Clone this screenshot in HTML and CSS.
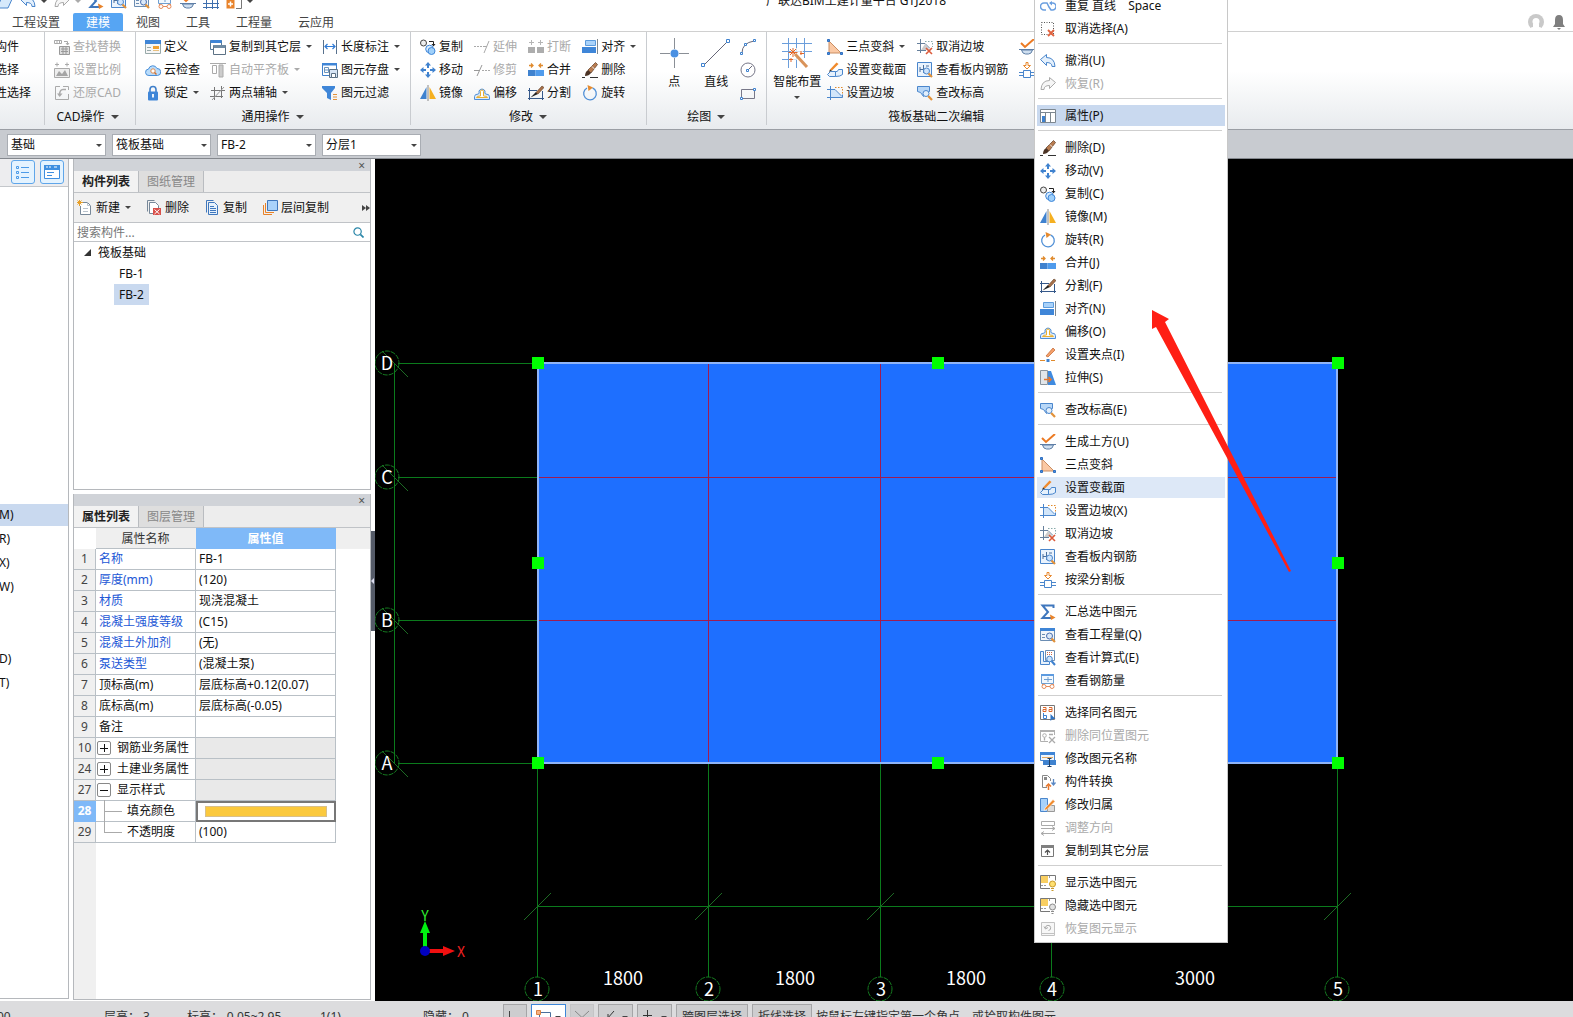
FILE: index.html
```html
<!DOCTYPE html>
<html lang="zh">
<head>
    <meta charset="UTF-8">
    <meta name="viewport" content="width=device-width, initial-scale=1.0">
    <title>广联达BIM土建计量平台 GTJ2018</title>
    <link rel="stylesheet" href="styles.css">
</head>
<body>
    <!-- 图标库 -->
    <svg class="sprite" aria-hidden="true">
        <symbol id="i-replace" viewBox="0 0 16 16"><path d="M0.500 1.500h7v3h-7zM3 1.500v3M5.500 1.500v3M10 2.500h3.500v3M12 4l1.500 2L15 4" fill="none" stroke="#a9a9a9"/><path d="M5.500 7.500h10v8h-10z" fill="#ddd" stroke="#999"/><path d="M7 10h7M7 12.500h7M9 8v7M12 8v7" stroke="#999"/></symbol>
        <symbol id="i-scale" viewBox="0 0 16 16"><path d="M1 2.500h4M3 .500v4M11 2.500h4M13 .500v4" stroke="#aaa"/><path d="M.500 6.500h15v9H.500z" fill="#eee" stroke="#aaa"/><path d="M2 14l3-5 3 3 3-4 3 6z" fill="#a5a5a5"/></symbol>
        <symbol id="i-restore" viewBox="0 0 16 16"><path d="M6 1.500H1.500v13h13V9M9 1.500h5.500V5" fill="none" stroke="#aaa"/><path d="M12 4.500H9c-3 0-3.500 3-3.500 6" fill="none" stroke="#aaa" stroke-width="1.500"/><path d="M3 8.500h5.500L5.700 12z" fill="#aaa"/></symbol>
        <symbol id="i-define" viewBox="0 0 16 16"><path d="M.500 1.500h15v13H.500z" fill="#f6f6f6" stroke="#9aa"/><path d="M0 1h16v4H0z" fill="#3f85d6"/><path d="M2 8.500h4M2 11.500h4" stroke="#9aa"/><path d="M8 7h6v3H8z" fill="#f0a030"/><path d="M8 11.500h6" stroke="#e8c080"/></symbol>
        <symbol id="i-cloud" viewBox="0 0 16 16"><path d="M4 13.500a3.200 3.200 0 0 1-.500-6.400A4.500 4.500 0 0 1 12 6.500a3.500 3.500 0 0 1 .500 7z" fill="#b9dcfb" stroke="#4a8fd8"/><circle cx="8" cy="9" r="2.200" fill="#fff" stroke="#e08a4a"/><path d="M9.500 10.500l2 2" stroke="#d07030" stroke-width="1.500"/></symbol>
        <symbol id="i-lock" viewBox="0 0 16 16"><path d="M5 8V4.500a3 3 0 0 1 6 0V8" fill="none" stroke="#3f7fca" stroke-width="1.600"/><rect x="3" y="6.500" width="10" height="9" rx="1" fill="#3f86d8"/><path d="M8 9v3.500" stroke="#fff" stroke-width="1.800"/></symbol>
        <symbol id="i-copyfloor" viewBox="0 0 16 16"><path d="M.500 1.500h11v9H.500z" fill="#fff" stroke="#567b9b"/><path d="M.500 1h11v3H.500z" fill="#3f85d6"/><path d="M3.500 6.500h12v9h-12z" fill="#fff" stroke="#5c7184"/><path d="M3.500 6h12v3h-12z" fill="#6f8ba3"/></symbol>
        <symbol id="i-level" viewBox="0 0 16 16"><path d="M0 1.500h16" stroke="#aaa"/><path d="M2.500 3.500h4v8h-4z" fill="#fff" stroke="#aaa"/><path d="M9 3h4v12H9z" fill="#ccc" stroke="#aaa"/></symbol>
        <symbol id="i-axis" viewBox="0 0 16 16"><path d="M4.500 2v13M11.500 1v12M1 5.500h14M0 11.500h13" stroke="#777"/><path d="M2 15L14 2" stroke="#999"/></symbol>
        <symbol id="i-dim" viewBox="0 0 16 16"><path d="M1.500 1v14M14.500 1v14" stroke="#58718d"/><path d="M3 7.500h10M5.500 5L3 7.500 5.500 10M10.500 5L13 7.500 10.500 10" fill="none" stroke="#2f7ad6" stroke-width="1.200"/></symbol>
        <symbol id="i-save" viewBox="0 0 16 16"><path d="M.500 1.500h14v12H.500z" fill="#fff" stroke="#3f7fca"/><path d="M0 1h15v2.500H0z" fill="#3f85d6"/><path d="M2.500 5.500h4v5h-4zM3 8h3" fill="none" stroke="#6a93bd"/><path d="M7.500 7.500h8v8h-8z" fill="#d7e5f5" stroke="#5c7184"/><path d="M9.500 11.500h4v4h-4z" fill="#fff" stroke="#5c7184"/></symbol>
        <symbol id="i-filter" viewBox="0 0 16 16"><path d="M0 1h13v2L9 8v7l-4-2V8L0 3z" fill="#3f86d8"/><path d="M11 9.500h4M11 12h4M11 14.500h4" stroke="#e2923a"/></symbol>
        <symbol id="i-copy" viewBox="0 0 16 16"><circle cx="3.500" cy="4" r="3" fill="#eee" stroke="#444"/><path d="M9 2.500h4.500V6" fill="none" stroke="#222"/><path d="M11.500 5h4l-2 2.500z" fill="#222"/><circle cx="9.500" cy="10" r="3.800" fill="#d9edff" stroke="#3f86d8"/><circle cx="11.500" cy="12" r="3.500" fill="#9fd0fa" stroke="#3f86d8"/></symbol>
        <symbol id="i-move" viewBox="0 0 16 16"><path d="M8 0l3 3.500H9V6H7V3.500H5zM8 16l3-3.500H9V10H7v2.500H5zM0 8l3.500-3v2H6v2H3.500v2zM16 8l-3.500-3v2H10v2h2.500v2z" fill="#3f82cf"/></symbol>
        <symbol id="i-mirror" viewBox="0 0 16 16"><path d="M6.500 2v12H0z" fill="#3f82cf"/><path d="M8 0v16" stroke="#888"/><path d="M9.500 2v12H16z" fill="#f5b021"/></symbol>
        <symbol id="i-extend" viewBox="0 0 16 16"><path d="M0 7.500h10" stroke="#aaa" stroke-dasharray="2 1"/><path d="M10 14l5-12M10 7.500h3" stroke="#aaa"/></symbol>
        <symbol id="i-trim" viewBox="0 0 16 16"><path d="M0 8.500h6M3 14L8 3" stroke="#999"/><path d="M8 8.500h8" stroke="#aaa" stroke-dasharray="2 1"/></symbol>
        <symbol id="i-offset" viewBox="0 0 16 16"><path d="M.500 14.500v-3q0-2.500 4-2.500 1-.500.500-3a3.300 3.300 0 0 1 6 0q-.500 2.500.500 3 4 0 4 2.500v3z" fill="#dceafa" stroke="#4f8fd6"/><path d="M2.500 12.500q0-1.500 4-1.500V6.500a1.500 1.500 0 0 1 3 0V11q4 0 4 1.500z" fill="#fff" stroke="#eab030"/></symbol>
        <symbol id="i-break" viewBox="0 0 16 16"><path d="M1 3.500h5M3.500 1v5M10 3.500h5M12.500 1v5" stroke="#b5b5b5"/><path d="M0 8h7v6H0zM9 8h7v6H9z" fill="#adadad"/></symbol>
        <symbol id="i-merge" viewBox="0 0 16 16"><path d="M1 3.500h4M11 3.500h4M3 1.500l2 2-2 2M13 1.500l-2 2 2 2" fill="none" stroke="#e08a2c" stroke-width="1.300"/><path d="M0 8h7.500v6H0z" fill="#3f82cf"/><path d="M7.500 8H16v6H7.500z" fill="#4f9bec"/></symbol>
        <symbol id="i-split" viewBox="0 0 16 16"><path d="M0 5.500h9M1.500 3v12M0 13.500h16M14.500 6v9" stroke="#35588a"/><path d="M2.500 12.500L8 7l2 2z" fill="#222"/><path d="M8 7.500L14 1l2 1.500-6 6.500z" fill="#a9714a" stroke="#5a3a22" stroke-width=".600"/></symbol>
        <symbol id="i-align" viewBox="0 0 16 16"><path d="M3.500 1.500h10v5h-10z" fill="#a9d2fa" stroke="#5c9bdc"/><path d="M0 8h14v6H0z" fill="#3f86d8"/><path d="M15.500 0v15" stroke="#7f8890"/></symbol>
        <symbol id="i-erase" viewBox="0 0 16 16"><path d="M0 15.500h3M8 15.500h8" stroke="#333"/><path d="M6 8l7.500-7.500 2 2L9 11z" fill="#b97c50" stroke="#5a3a22" stroke-width=".700"/><path d="M10 4.500l3 3" stroke="#eee"/><path d="M3 14q0-4 3-6l3 3q-2 3-6 3z" fill="#4b3325"/></symbol>
        <symbol id="i-rotate" viewBox="0 0 16 16"><path d="M10.500 2.800A6.300 6.300 0 1 1 5 3" fill="none" stroke="#4f8fd6" stroke-width="1.300"/><path d="M5.500 0L11 2.500 6.500 6z" fill="#e58a2e"/></symbol>
        <symbol id="i-point" viewBox="0 0 30 30"><path d="M15.500 0v11M15.500 20v10M1 15.500h10M20 15.500h10" stroke="#8a8f96"/><circle cx="15.500" cy="15.500" r="4" fill="#4a90e2"/></symbol>
        <symbol id="i-line" viewBox="0 0 30 30"><path d="M3 27L27 3" stroke="#667"/><path d="M.500 25.500h3v3h-3zM25.500 1.500h3v3h-3z" fill="#fff" stroke="#3f82cf"/></symbol>
        <symbol id="i-arc" viewBox="0 0 16 16"><path d="M2 14Q2 4 14 2" fill="none" stroke="#667"/><path d="M.500 13.500h2v2h-2zM13.500.500h2v2h-2zM4.500 4.500h2v2h-2z" fill="#fff" stroke="#3f82cf"/></symbol>
        <symbol id="i-circle" viewBox="0 0 16 16"><circle cx="8" cy="8" r="7" fill="none" stroke="#778"/><path d="M8 8l4-4" stroke="#667"/><path d="M6.500 7.500h2v2h-2z" fill="#fff" stroke="#3f82cf"/></symbol>
        <symbol id="i-rect" viewBox="0 0 16 16"><path d="M1.500 4.500h13v9h-13z" fill="none" stroke="#778"/><path d="M.500 12.500h2v2h-2zM13.500 3.500h2v2h-2z" fill="#fff" stroke="#3f82cf"/></symbol>
        <symbol id="i-smart" viewBox="0 0 30 30"><path d="M6.500 0v30M14.500 0v30M22.500 0v20M0 5.500h30M0 13.500h30M0 21.500h14" stroke="#6b9edb"/><path d="M9 10h12v12H9z" fill="#fff" fill-opacity=".700"/><path d="M11 10v9M6.500 14.500h9M8 11l6 6M14 11l-6 6M19 17v-4M9 24v-4M18 15.500h4M7 21.500h4" stroke="#e2682a"/><path d="M13 16l12 13" stroke="#d9935a" stroke-width="3"/></symbol>
        <symbol id="i-slope3" viewBox="0 0 16 16"><path d="M2 2l12 12H2z" fill="#fbc9a4" stroke="#c98d62"/><path d="M.500.500h2v2h-2zM.500 13.500h2v2h-2zM13.500 13.500h2v2h-2z" fill="#4a90e2" stroke="#2f6fc0"/></symbol>
        <symbol id="i-section" viewBox="0 0 16 16"><path d="M.500 12.500l3-3h5q2 1 3-2h4v5q-2 2-7 2h-6z" fill="#e6f1fc" stroke="#4a86cc"/><path d="M8.500 9.500v5" stroke="#4a86cc"/><path d="M3 7.500L9.500.500 11.500 2 5 8.500z" fill="#f08a2c"/><path d="M3 7.500l-1 2.500 3-1.500z" fill="#333"/></symbol>
        <symbol id="i-setslope" viewBox="0 0 16 16"><path d="M4 5h4l7 7H4z" fill="#d2e6fa"/><path d="M3.500 1v14M0 4.500h8l7 7M0 12.500h15.500v-3" fill="none" stroke="#4a86cc"/><path d="M8 2.500h7.500V10" fill="none" stroke="#e08a2c" stroke-dasharray="1.500 1.500"/></symbol>
        <symbol id="i-cancelslope" viewBox="0 0 16 16"><path d="M3.500 0v14M0 4.500h8l5 5M0 11.500h9" fill="none" stroke="#66809c"/><path d="M4 11l4-6 5 6z" fill="#ccc"/><path d="M8 2.500h7.500V8" fill="none" stroke="#8aa" stroke-dasharray="1.500 1.500"/><path d="M9 9l6 6M15 9l-6 6" stroke="#dc5a3a" stroke-width="1.600"/></symbol>
        <symbol id="i-rebar" viewBox="0 0 16 16"><path d="M.500.500h14v14H.500z" fill="#eaf3fd" stroke="#4a86cc"/><path d="M3 7.500h6M6.500 3v8M3 5v5M9 4h3" fill="none" stroke="#4a6f9c"/><circle cx="9.500" cy="9" r="3" fill="#cfe4fb" stroke="#4a86cc"/><path d="M11.500 11.500l3.500 3.500" stroke="#e2923a" stroke-width="2.200"/></symbol>
        <symbol id="i-elev" viewBox="0 0 16 16"><path d="M.500 1.500h12v5l-3 1-3 4-3-4-3-1z" fill="#b8d7f7" stroke="#4a86cc"/><circle cx="9" cy="8.500" r="3" fill="#e3effb" stroke="#4a86cc"/><path d="M11.200 11l3.800 4" stroke="#e2923a" stroke-width="2.200"/></symbol>
        <symbol id="i-earth" viewBox="0 0 16 16"><path d="M2 4l4 4 9-8" fill="none" stroke="#ec7a23" stroke-width="2"/><path d="M0 10.500h16" stroke="#5f7fa6"/><path d="M2.500 11q1 4 4 4h3q3 0 4-4z" fill="#cfdff0" stroke="#5f7fa6"/></symbol>
        <symbol id="i-beam" viewBox="0 0 16 16"><path d="M4.500 8.500h7v7h-7zM0 10.500h4.500M0 13.500h4.500M11.500 10.500H16M11.500 13.500H16" fill="#fff" stroke="#4a86cc"/><path d="M7 .500h2v3h2.500L8 7 4.500 3.500H7z" fill="#fff" stroke="#e8882e"/></symbol>
        <symbol id="i-repeat" viewBox="0 0 16 16"><path d="M6 12H4a3.500 3.500 0 0 1 0-7h3l2 4 2 3h1.500a3.500 3.500 0 0 0 0-7H10" fill="none" stroke="#6a9fe0" stroke-width="1.500"/><path d="M12 3l-3 2 3 2.500z" fill="#6a9fe0"/></symbol>
        <symbol id="i-deselect" viewBox="0 0 16 16"><path d="M1.500 1.500h12v12h-12z" fill="none" stroke="#555" stroke-dasharray="1 1.500"/><path d="M8 9l6 6M14 9l-6 6" stroke="#e0623e" stroke-width="1.800"/></symbol>
        <symbol id="i-undo" viewBox="0 0 16 16"><path d="M.500 6.500l6-5v3q8 0 8.500 9h-3q0-4-5.500-4v3z" fill="#e4f0fc" stroke="#4a86cc"/></symbol>
        <symbol id="i-redo" viewBox="0 0 16 16"><path d="M15.500 6.500l-6-5v3q-8 0-8.500 9h3q0-4 5.500-4v3z" fill="#f6f6f6" stroke="#aaa"/></symbol>
        <symbol id="i-props" viewBox="0 0 16 16"><path d="M.500 1.500h15v13H.500z" fill="#fff" stroke="#7d8790"/><path d="M0 4.500h16M5.500 4v11M10.500 4v11" stroke="#7d8790"/><path d="M2 8h3v6H2z" fill="#3f82cf"/></symbol>
        <symbol id="i-grip" viewBox="0 0 16 16"><path d="M0 13.500h5M11 13.500h4" stroke="#e08a2c"/><path d="M6.500 12h3v3h-3z" fill="#3f82cf"/><path d="M6 9l7-8 2 2-7 7z" fill="#f4a06a" stroke="#c0622c" stroke-width=".700"/></symbol>
        <symbol id="i-stretch" viewBox="0 0 16 16"><path d="M.500.500h7v14h-7z" fill="#e2e6ea" stroke="#8b949c"/><path d="M8 1h3l5 14H8z" fill="#3f8be0"/><path d="M4 9.500h7M8.500 7l2.500 2.500L8.500 12" fill="none" stroke="#e8762a" stroke-width="1.500"/></symbol>
        <symbol id="i-sigma" viewBox="0 0 16 16"><path d="M13.500 4V1.500H2.500L8 8l-5.500 6h9" fill="none" stroke="#3f77bd" stroke-width="2"/><path d="M10 10.500l5.500 3-4.500 2.500z" fill="#e8832a"/></symbol>
        <symbol id="i-viewqty" viewBox="0 0 16 16"><path d="M.500 1.500h14v12H.500z" fill="#f2f6fa" stroke="#6b8db3"/><path d="M0 1h15v3H0z" fill="#3f85d6"/><path d="M2 7.500h3M2 10.500h3" stroke="#6b8db3"/><circle cx="9.500" cy="9" r="3" fill="#dbe9f8" stroke="#4a6fb0"/><path d="M11.500 11.500l3.500 3.500" stroke="#e2923a" stroke-width="2.200"/></symbol>
        <symbol id="i-formula" viewBox="0 0 16 16"><path d="M.500 1.500h3v10h6v3h-9z" fill="#e8f2fc" stroke="#4a86cc"/><path d="M5.500.500h9v10h-9z" fill="#fff" stroke="#6b8db3"/><path d="M7 2.500h6M7 4.500h6" stroke="#d0684a" stroke-dasharray="1 1"/><circle cx="9.500" cy="9" r="2.800" fill="#cfe4fb" stroke="#4a86cc"/><path d="M11.500 11l3.500 4" stroke="#3f82cf" stroke-width="2"/></symbol>
        <symbol id="i-rebarqty" viewBox="0 0 16 16"><path d="M1.500 1.500h12v9h-12z" fill="#f2f8fe" stroke="#6f9fd0"/><path d="M1 1h13v2H1z" fill="#5d9be0"/><path d="M4 6.500h8M8 4v5" stroke="#6f9fd0"/><path d="M6 13.500h4M2 11l1 1M14 11l-1 1" stroke="#e58a5a"/><circle cx="4" cy="13.500" r="2" fill="#fff" stroke="#e58a5a"/><circle cx="12" cy="13.500" r="2" fill="#fff" stroke="#e58a5a"/></symbol>
        <symbol id="i-samename" viewBox="0 0 16 16"><path d="M.500.500h14v14H.500z" fill="#fff" stroke="#777"/><path d="M3 2.500h3v4H3v-2h3M9 2.500h3v4H9v-2h3" fill="none" stroke="#dc6a2e"/><path d="M3.500 8v5.500h3v-3h-3" fill="none" stroke="#3f82cf"/><path d="M10.500 9v7l2-2h3z" fill="#2f74c4"/></symbol>
        <symbol id="i-delsame" viewBox="0 0 16 16"><path d="M14.500 7V2.500H.500v11H8" fill="none" stroke="#b0b0b0"/><path d="M0 2h15v2H0z" fill="#b0b0b0"/><circle cx="4.500" cy="7.500" r="1.800" fill="#fff" stroke="#b0b0b0"/><path d="M4.500 9.500v3M9 6.500h4M9 9l6 6M15 9l-6 6" stroke="#aaa" stroke-width="1.300"/></symbol>
        <symbol id="i-rename" viewBox="0 0 16 16"><path d="M.500 1.500h14v8H.500z" fill="#eef5fc" stroke="#4a86cc"/><path d="M0 1h15v3H0z" fill="#3f85d6"/><path d="M2 6.500h11" stroke="#e2a860"/><path d="M3 9h13v5H3z" fill="#3f82cf"/><path d="M9.500 7v8.500M7.500 7.500h4M7.500 15.500h4" stroke="#1f3f66"/></symbol>
        <symbol id="i-convert" viewBox="0 0 16 16"><path d="M7 13.500H2.500v-12h5l3 3V7" fill="#fff" stroke="#888"/><path d="M4 3h3v3H4z" fill="#888"/><path d="M8.500 16v-4.500M6 12.500L8.500 10l2.500 2.500" fill="none" stroke="#e8762a" stroke-width="1.500"/><path d="M13.500 5v6M11.500 8.500l2 2.500 2-2.500" fill="none" stroke="#5a88c4" stroke-width="1.300"/></symbol>
        <symbol id="i-belong" viewBox="0 0 16 16"><path d="M.500 1.500h7v13h-7z" fill="#a9d2fa" stroke="#4a86cc"/><path d="M7.500 8.500h7v6h-7z" fill="#ddd" stroke="#999"/><path d="M5 11l8-8.500 2 2-8 8-3 1z" fill="#f08a2c" stroke="#fff" stroke-width=".600"/></symbol>
        <symbol id="i-direction" viewBox="0 0 16 16"><path d="M1.500 1.500h13v4h-13z" fill="#fff" stroke="#aaa"/><path d="M1 8.500h14M12 6.500l3 2-3 2M15 13.500H1M4 11.500l-3 2 3 2" fill="none" stroke="#aaa"/></symbol>
        <symbol id="i-copylayer" viewBox="0 0 16 16"><path d="M1.500 2.500h12v11h-12z" fill="#fff" stroke="#777"/><path d="M1 2h13v3H1z" fill="#808080"/><path d="M7.500 12V7M5 9.500L7.500 7 10 9.500" fill="none" stroke="#555" stroke-width="1.200"/></symbol>
        <symbol id="i-show" viewBox="0 0 16 16"><path d="M10 13.500H.500V.500h15v5" fill="none" stroke="#777"/><path d="M1 1h7v7H1z" fill="#f9cf62"/><path d="M9.500 1v3M1 10.500h5" stroke="#999" stroke-dasharray="2 1"/><circle cx="12.500" cy="9" r="3" fill="#ffe071" stroke="#c99a2e"/><path d="M11 13.500h3M11.500 15.500h2" stroke="#c99a2e"/></symbol>
        <symbol id="i-hide" viewBox="0 0 16 16"><path d="M10 13.500H.500V.500h15v5" fill="none" stroke="#777"/><path d="M1 1h7v7H1z" fill="#f9cf62"/><path d="M9.500 1v3M1 10.500h5" stroke="#999" stroke-dasharray="2 1"/><circle cx="12.500" cy="9" r="3" fill="#e2e2e2" stroke="#8b8b8b"/><path d="M11 13.500h3M11.500 15.500h2" stroke="#8b8b8b"/></symbol>
        <symbol id="i-unhide" viewBox="0 0 16 16"><path d="M1.500 1.500h13v13h-13zM2 12.500h12" fill="#f7f7f7" stroke="#c2c2c2"/><path d="M5.500 7a2.600 2.600 0 1 1 3 2.500M4 5.500L5.500 8 8 6.500" fill="none" stroke="#aaa"/></symbol>
        <symbol id="i-new" viewBox="0 0 16 16"><path d="M4 2.500h6.500l3 3v9h-10V6" fill="#fff" stroke="#778899"/><path d="M10.500 2.500v3h3M6 8.500h5M6 11.500h5" fill="none" stroke="#b8c2cc"/><path d="M2.500 0v6M0 2.500h6M.500.500l4 4M4.500.500l-4 4" stroke="#e8a02a"/></symbol>
        <symbol id="i-del" viewBox="0 0 16 16"><path d="M1.500 11.500V.500h7" fill="none" stroke="#778899"/><path d="M3.500 2.500h6l3 3v8h-9z" fill="#fff" stroke="#778899"/><path d="M7 8h8v7H7z" fill="#d9504a"/><path d="M8.500 9.500l5 4.500M13.500 9.500l-5 4.500" stroke="#fff"/></symbol>
        <symbol id="i-doc" viewBox="0 0 16 16"><path d="M2.500 12.500v-12h7" fill="none" stroke="#3f77bd"/><path d="M4.500 2.500h6l3 3v9h-9z" fill="#e6f1fc" stroke="#3f77bd"/><path d="M6 6.500h4M6 8.500h6M6 10.500h6M6 12.500h6" stroke="#3f77bd"/></symbol>
        <symbol id="i-floorcopy" viewBox="0 0 16 16"><path d="M1.500 5v9.500H10M3.500 3v9.500H12" fill="none" stroke="#e8832a"/><path d="M5.500.500h10v10h-10z" fill="#a9d2fa" stroke="#3f77bd"/></symbol>
        <symbol id="i-search" viewBox="0 0 12 12"><circle cx="5" cy="5" r="4" fill="none" stroke="#2a86a8" stroke-width="1.300"/><path d="M8 8l3.500 3.500" stroke="#2a86a8" stroke-width="1.800"/></symbol>
        <symbol id="i-list" viewBox="0 0 16 16"><path d="M1.500 2.500h2v2h-2zM1.500 7.500h2v2h-2zM1.500 12.500h2v2h-2zM6 3.500h8M6 8.500h8M6 13.500h8" fill="none" stroke="#4c9be8"/></symbol>
        <symbol id="i-card" viewBox="0 0 16 16"><path d="M.500 1.500h15v13H.500z" fill="#fff" stroke="#3f8fe0"/><path d="M0 1h16v5H0z" fill="#3f8fe0"/><path d="M2 3h2M5 3h2M10 3h3" stroke="#fff"/><path d="M3 8.500h7M3 11.500h5" stroke="#3f8fe0"/></symbol>
        <symbol id="i-open" viewBox="0 0 16 16"><path d="M0 15L5 4h11l-5 11z" fill="#d6e9fb" stroke="#4a86cc"/></symbol>
        <symbol id="i-grid" viewBox="0 0 16 16"><path d="M3.500 0v16M9.500 0v16M14.500 0v16M0 10.500h16M0 14.500h16" stroke="#3f6fae"/></symbol>
        <symbol id="i-addblock" viewBox="0 0 16 16"><path d="M.500 6.500h8v9h-8z" fill="#e8832a"/><path d="M2 11h5M4.500 8.500v5" stroke="#fff" stroke-width="1.500"/><path d="M10 15.500h5.500V3H9" fill="none" stroke="#777"/></symbol>
        <symbol id="i-user" viewBox="0 0 16 16"><circle cx="8" cy="8" r="8" fill="#c9c9c9"/><circle cx="8" cy="7.500" r="3.500" fill="#fff"/><path d="M5 10h6v3q3 0 3 3H2q0-3 3-3z" fill="#fff"/></symbol>
        <symbol id="i-bell" viewBox="0 0 12 16"><path d="M6 1q4 0 4 5v4l2 3H0l2-3V6q0-5 4-5z" fill="#7f7f7f"/><path d="M4 14h4l-2 2z" fill="#7f7f7f"/></symbol>
    </svg>

    <!-- 标题栏 -->
    <header class="titlebar">
        <div class="quick">
            <button aria-label="打开"><svg class="icon"><use href="#i-open"/></svg></button>
            <button aria-label="撤消"><svg class="icon"><use href="#i-undo"/></svg><i class="arrow"></i></button>
            <button aria-label="恢复" disabled><svg class="icon"><use href="#i-redo"/></svg><i class="arrow"></i></button>
            <button aria-label="汇总"><svg class="icon"><use href="#i-sigma"/></svg></button>
            <button aria-label="查看"><svg class="icon"><use href="#i-rebar"/></svg></button>
            <button aria-label="工程量"><svg class="icon"><use href="#i-viewqty"/></svg></button>
            <button aria-label="钢筋量"><svg class="icon"><use href="#i-rebarqty"/></svg></button>
            <button aria-label="土方"><svg class="icon"><use href="#i-earth"/></svg></button>
            <button aria-label="轴网"><svg class="icon"><use href="#i-grid"/></svg></button>
            <button aria-label="更多"><svg class="icon"><use href="#i-addblock"/></svg><i class="arrow"></i></button>
        </div>
        <div class="app-title">广联达BIM土建计量平台 GTJ2018</div>
    </header>

    <!-- 功能页签 -->
    <nav class="tabs">
        <a href="#">工程设置</a>
        <a href="#" class="active">建模</a>
        <a href="#">视图</a>
        <a href="#">工具</a>
        <a href="#">工程量</a>
        <a href="#">云应用</a>
        <div class="account">
            <button aria-label="用户"><svg class="icon"><use href="#i-user"/></svg></button>
            <button aria-label="消息"><svg class="icon bell"><use href="#i-bell"/></svg></button>
        </div>
    </nav>

    <!-- 功能区 -->
    <div class="ribbon">
        <section class="group group-select">
            <div class="cmds">
                <button>构件</button>
                <button>选择</button>
                <button>性选择</button>
            </div>
        </section>
        <section class="group group-cad">
            <div class="cmds">
                <button disabled><svg class="icon"><use href="#i-replace"/></svg>查找替换</button>
                <button disabled><svg class="icon"><use href="#i-scale"/></svg>设置比例</button>
                <button disabled><svg class="icon"><use href="#i-restore"/></svg>还原CAD</button>
            </div>
            <h2>CAD操作<i class="arrow big"></i></h2>
        </section>
        <section class="group group-common">
            <div class="cmds">
                <button><svg class="icon"><use href="#i-define"/></svg>定义</button>
                <button><svg class="icon"><use href="#i-cloud"/></svg>云检查</button>
                <button><svg class="icon"><use href="#i-lock"/></svg>锁定<i class="arrow"></i></button>
                <button><svg class="icon"><use href="#i-copyfloor"/></svg>复制到其它层<i class="arrow"></i></button>
                <button disabled><svg class="icon"><use href="#i-level"/></svg>自动平齐板<i class="arrow"></i></button>
                <button><svg class="icon"><use href="#i-axis"/></svg>两点辅轴<i class="arrow"></i></button>
                <button><svg class="icon"><use href="#i-dim"/></svg>长度标注<i class="arrow"></i></button>
                <button><svg class="icon"><use href="#i-save"/></svg>图元存盘<i class="arrow"></i></button>
                <button><svg class="icon"><use href="#i-filter"/></svg>图元过滤</button>
            </div>
            <h2>通用操作<i class="arrow big"></i></h2>
        </section>
        <section class="group">
            <div class="cmds">
                <button><svg class="icon"><use href="#i-copy"/></svg>复制</button>
                <button><svg class="icon"><use href="#i-move"/></svg>移动</button>
                <button><svg class="icon"><use href="#i-mirror"/></svg>镜像</button>
                <button disabled><svg class="icon"><use href="#i-extend"/></svg>延伸</button>
                <button disabled><svg class="icon"><use href="#i-trim"/></svg>修剪</button>
                <button><svg class="icon"><use href="#i-offset"/></svg>偏移</button>
                <button disabled><svg class="icon"><use href="#i-break"/></svg>打断</button>
                <button><svg class="icon"><use href="#i-merge"/></svg>合并</button>
                <button><svg class="icon"><use href="#i-split"/></svg>分割</button>
                <button><svg class="icon"><use href="#i-align"/></svg>对齐<i class="arrow"></i></button>
                <button><svg class="icon"><use href="#i-erase"/></svg>删除</button>
                <button><svg class="icon"><use href="#i-rotate"/></svg>旋转</button>
            </div>
            <h2>修改<i class="arrow big"></i></h2>
        </section>
        <section class="group">
            <div class="mixed">
                <button class="big-cmd"><svg class="icon-big"><use href="#i-point"/></svg>点</button>
                <button class="big-cmd"><svg class="icon-big"><use href="#i-line"/></svg>直线</button>
                <div class="cmds icons-only">
                    <button aria-label="弧"><svg class="icon"><use href="#i-arc"/></svg></button>
                    <button aria-label="圆"><svg class="icon"><use href="#i-circle"/></svg></button>
                    <button aria-label="矩形"><svg class="icon"><use href="#i-rect"/></svg></button>
                </div>
            </div>
            <h2>绘图<i class="arrow big"></i></h2>
        </section>
        <section class="group group-edit">
            <div class="mixed">
                <button class="big-cmd wide"><svg class="icon-big"><use href="#i-smart"/></svg>智能布置<i class="arrow"></i></button>
                <div class="cmds">
                    <button><svg class="icon"><use href="#i-slope3"/></svg>三点变斜<i class="arrow"></i></button>
                    <button><svg class="icon"><use href="#i-section"/></svg>设置变截面</button>
                    <button><svg class="icon"><use href="#i-setslope"/></svg>设置边坡</button>
                    <button><svg class="icon"><use href="#i-cancelslope"/></svg>取消边坡</button>
                    <button><svg class="icon"><use href="#i-rebar"/></svg>查看板内钢筋</button>
                    <button><svg class="icon"><use href="#i-elev"/></svg>查改标高</button>
                    <button class="tail" aria-label="生成土方"><svg class="icon"><use href="#i-earth"/></svg></button>
                    <button class="tail" aria-label="按梁分割板"><svg class="icon"><use href="#i-beam"/></svg></button>
                </div>
            </div>
            <h2>筏板基础二次编辑</h2>
        </section>
    </div>

    <!-- 构件选择栏 -->
    <div class="combobar">
        <label class="combo"><select aria-label="类别"><option>基础</option></select></label>
        <label class="combo"><select aria-label="构件类型"><option>筏板基础</option></select></label>
        <label class="combo"><select aria-label="构件"><option>FB-2</option></select></label>
        <label class="combo"><select aria-label="分层"><option>分层1</option></select></label>
    </div>

    <main class="workspace">
        <!-- 导航树 -->
        <aside class="navtree">
            <div class="view-switch">
                <button aria-label="列表"><svg class="icon"><use href="#i-list"/></svg></button>
                <button aria-label="卡片"><svg class="icon"><use href="#i-card"/></svg></button>
            </div>
            <ul>
                <li class="selected">M)</li>
                <li>R)</li>
                <li>X)</li>
                <li>W)</li>
                <li></li>
                <li></li>
                <li>D)</li>
                <li>T)</li>
            </ul>
        </aside>

        <div class="docks">
            <!-- 构件列表 -->
            <section class="panel panel-list">
                <div class="panel-bar"><button aria-label="关闭">×</button></div>
                <div class="panel-tabs">
                    <button class="active">构件列表</button>
                    <button>图纸管理</button>
                </div>
                <div class="panel-tools">
                    <button><svg class="icon"><use href="#i-new"/></svg>新建<i class="arrow"></i></button>
                    <button><svg class="icon"><use href="#i-del"/></svg>删除</button>
                    <button><svg class="icon"><use href="#i-doc"/></svg>复制</button>
                    <button><svg class="icon"><use href="#i-floorcopy"/></svg>层间复制</button>
                    <button class="more" aria-label="更多"><i></i><i></i></button>
                </div>
                <label class="search">
                    <input type="text" placeholder="搜索构件..." aria-label="搜索构件">
                    <svg class="icon-search"><use href="#i-search"/></svg>
                </label>
                <div class="tree">
                    <div class="tree-root"><svg class="twisty" viewBox="0 0 7 7"><path d="M7 0v7H0z" fill="#333"/></svg>筏板基础</div>
                    <ul>
                        <li><span>FB-1</span></li>
                        <li><span class="selected">FB-2</span></li>
                    </ul>
                </div>
            </section>

            <!-- 属性列表 -->
            <section class="panel panel-props">
                <div class="panel-bar"><button aria-label="关闭">×</button></div>
                <div class="panel-tabs">
                    <button class="active">属性列表</button>
                    <button>图层管理</button>
                </div>
                <div class="props-body">
                    <table class="props">
                        <thead>
                            <tr><th class="corner"></th><th>属性名称</th><th class="current">属性值</th><th></th></tr>
                        </thead>
                        <tbody>
                            <tr><th>1</th><td class="key">名称</td><td>FB-1</td></tr>
                            <tr><th>2</th><td class="key">厚度(mm)</td><td>(120)</td></tr>
                            <tr><th>3</th><td class="key">材质</td><td>现浇混凝土</td></tr>
                            <tr><th>4</th><td class="key">混凝土强度等级</td><td>(C15)</td></tr>
                            <tr><th>5</th><td class="key">混凝土外加剂</td><td>(无)</td></tr>
                            <tr><th>6</th><td class="key">泵送类型</td><td>(混凝土泵)</td></tr>
                            <tr><th>7</th><td>顶标高(m)</td><td>层底标高+0.12(0.07)</td></tr>
                            <tr><th>8</th><td>底标高(m)</td><td>层底标高(-0.05)</td></tr>
                            <tr><th>9</th><td>备注</td><td></td></tr>
                            <tr><th>10</th><td class="fold"><button class="expander" aria-label="展开"></button>钢筋业务属性</td><td class="off"></td></tr>
                            <tr><th>24</th><td class="fold"><button class="expander" aria-label="展开"></button>土建业务属性</td><td class="off"></td></tr>
                            <tr><th>27</th><td class="fold"><button class="expander open" aria-label="收起"></button>显示样式</td><td class="off"></td></tr>
                            <tr><th class="current">28</th><td class="child">填充颜色</td><td class="editing"><button class="swatch" aria-label="填充颜色"></button></td></tr>
                            <tr><th>29</th><td class="child last">不透明度</td><td>(100)</td></tr>
                        </tbody>
                    </table>
                </div>
            </section>
        </div>

        <div class="splitter"><button aria-label="收起面板"></button></div>

        <!-- 绘图区 -->
        <div class="canvas">
            <svg class="drawing">
                <g class="axis-lines">
                    <path d="M23 204.500H163M23 318.500H163M23 461.500H163M23 604.500H163M19.500 204V604"/>
                    <path d="M162.500 604V818M333.500 604V818M505.500 604V818M676.500 604V818M962.500 604V818M162 747.500H962"/>
                </g>
                <g class="ticks">
                    <path d="M7 192l26 26M7 306l26 26M7 449l26 26M7 592l26 26"/>
                    <path d="M149 761l27-27M320 761l27-27M492 761l27-27M663 761l27-27M949 761l27-27"/>
                </g>
                <rect class="slab" x="163" y="204" width="799" height="400"/>
                <path class="grid-lines" d="M333.500 205V603M505.500 205V603M676.500 205V603M164 318.500H961M164 461.500H961"/>
                <g class="handles">
                    <rect x="157" y="198" width="12" height="12"/>
                    <rect x="557" y="198" width="12" height="12"/>
                    <rect x="957" y="198" width="12" height="12"/>
                    <rect x="157" y="398" width="12" height="12"/>
                    <rect x="957" y="398" width="12" height="12"/>
                    <rect x="157" y="598" width="12" height="12"/>
                    <rect x="557" y="598" width="12" height="12"/>
                    <rect x="957" y="598" width="12" height="12"/>
                </g>
                <g class="bubbles">
                    <circle cx="12" cy="204" r="12"/>
                    <circle cx="12" cy="318" r="12"/>
                    <circle cx="12" cy="461" r="12"/>
                    <circle cx="12" cy="604" r="12"/>
                    <circle cx="162" cy="830" r="12"/>
                    <circle cx="333" cy="830" r="12"/>
                    <circle cx="505" cy="830" r="12"/>
                    <circle cx="677" cy="830" r="12"/>
                    <circle cx="962" cy="830" r="12"/>
                </g>
                <g class="labels">
                    <text x="12" y="211">D</text>
                    <text x="12" y="325">C</text>
                    <text x="12" y="468">B</text>
                    <text x="12" y="611">A</text>
                    <text x="163" y="837">1</text>
                    <text x="334" y="837">2</text>
                    <text x="506" y="837">3</text>
                    <text x="677" y="837">4</text>
                    <text x="963" y="837">5</text>
                    <text x="248" y="826">1800</text>
                    <text x="420" y="826">1800</text>
                    <text x="591" y="826">1800</text>
                    <text x="820" y="826">3000</text>
                </g>
                <!-- 坐标系 -->
                <g class="ucs">
                    <path d="M48 792v-18h-3l5-12 5 12h-3v18z" fill="#00f010"/>
                    <path d="M50 790h18v-3l12 5-12 5v-3H50z" fill="#f01010"/>
                    <circle cx="50" cy="792" r="5" fill="#0000c0"/>
                    <text x="50" y="762" fill="#30f030">Y</text>
                    <text x="86" y="798" fill="#f02020">X</text>
                </g>
            </svg>
        </div>
    </main>

    <!-- 状态栏 -->
    <footer class="statusbar">
        <span class="st-a">00</span>
        <span class="st-b">层高： 3</span>
        <span class="st-c">标高：-0.05~2.95</span>
        <span class="st-d">1(1)</span>
        <span class="st-e">隐藏： 0</span>
        <div class="snap">
            <button aria-label="正交"><svg class="icon"><path d="M2.500 2v12h12" fill="none" stroke="#444"/></svg></button>
            <button class="on" aria-label="捕捉"><svg class="icon"><path d="M4.500 3.500h11v12h-11z" fill="#fff" stroke="#4a6f9c"/><path d="M1.500 1.500h4v4h-4z" fill="#f4b183" stroke="#dc8040"/></svg><i class="arrow"></i></button>
            <button class="flat" aria-label="交点"><svg class="icon"><path d="M1 2l14 13M15 2L1 15" stroke="#888"/></svg></button>
            <button aria-label="垂点"><svg class="icon"><path d="M12 2L5 10M6 5v6h6" fill="none" stroke="#333"/></svg><i class="arrow"></i></button>
            <button aria-label="中点"><svg class="icon"><path d="M6.500 1v10M2 6.500h9" stroke="#333"/></svg><i class="arrow"></i></button>
            <button class="text">跨图层选择</button>
            <button class="text">折线选择</button>
        </div>
        <span>按鼠标左键指定第一个角点，或拾取构件图元</span>
    </footer>

    <!-- 右键菜单 -->
    <ul class="context-menu">
        <li><button><svg class="icon"><use href="#i-repeat"/></svg>重复 直线<kbd>Space</kbd></button></li>
        <li><button><svg class="icon"><use href="#i-deselect"/></svg>取消选择(A)</button></li>
        <li class="sep"></li>
        <li><button><svg class="icon"><use href="#i-undo"/></svg>撤消(U)</button></li>
        <li><button disabled><svg class="icon"><use href="#i-redo"/></svg>恢复(R)</button></li>
        <li class="sep"></li>
        <li><button class="selected"><svg class="icon"><use href="#i-props"/></svg>属性(P)</button></li>
        <li class="sep"></li>
        <li><button><svg class="icon"><use href="#i-erase"/></svg>删除(D)</button></li>
        <li><button><svg class="icon"><use href="#i-move"/></svg>移动(V)</button></li>
        <li><button><svg class="icon"><use href="#i-copy"/></svg>复制(C)</button></li>
        <li><button><svg class="icon"><use href="#i-mirror"/></svg>镜像(M)</button></li>
        <li><button><svg class="icon"><use href="#i-rotate"/></svg>旋转(R)</button></li>
        <li><button><svg class="icon"><use href="#i-merge"/></svg>合并(J)</button></li>
        <li><button><svg class="icon"><use href="#i-split"/></svg>分割(F)</button></li>
        <li><button><svg class="icon"><use href="#i-align"/></svg>对齐(N)</button></li>
        <li><button><svg class="icon"><use href="#i-offset"/></svg>偏移(O)</button></li>
        <li><button><svg class="icon"><use href="#i-grip"/></svg>设置夹点(I)</button></li>
        <li><button><svg class="icon"><use href="#i-stretch"/></svg>拉伸(S)</button></li>
        <li class="sep"></li>
        <li><button><svg class="icon"><use href="#i-elev"/></svg>查改标高(E)</button></li>
        <li class="sep"></li>
        <li><button><svg class="icon"><use href="#i-earth"/></svg>生成土方(U)</button></li>
        <li><button><svg class="icon"><use href="#i-slope3"/></svg>三点变斜</button></li>
        <li><button class="hover"><svg class="icon"><use href="#i-section"/></svg>设置变截面</button></li>
        <li><button><svg class="icon"><use href="#i-setslope"/></svg>设置边坡(X)</button></li>
        <li><button><svg class="icon"><use href="#i-cancelslope"/></svg>取消边坡</button></li>
        <li><button><svg class="icon"><use href="#i-rebar"/></svg>查看板内钢筋</button></li>
        <li><button><svg class="icon"><use href="#i-beam"/></svg>按梁分割板</button></li>
        <li class="sep"></li>
        <li><button><svg class="icon"><use href="#i-sigma"/></svg>汇总选中图元</button></li>
        <li><button><svg class="icon"><use href="#i-viewqty"/></svg>查看工程量(Q)</button></li>
        <li><button><svg class="icon"><use href="#i-formula"/></svg>查看计算式(E)</button></li>
        <li><button><svg class="icon"><use href="#i-rebarqty"/></svg>查看钢筋量</button></li>
        <li class="sep"></li>
        <li><button><svg class="icon"><use href="#i-samename"/></svg>选择同名图元</button></li>
        <li><button disabled><svg class="icon"><use href="#i-delsame"/></svg>删除同位置图元</button></li>
        <li><button><svg class="icon"><use href="#i-rename"/></svg>修改图元名称</button></li>
        <li><button><svg class="icon"><use href="#i-convert"/></svg>构件转换</button></li>
        <li><button><svg class="icon"><use href="#i-belong"/></svg>修改归属</button></li>
        <li><button disabled><svg class="icon"><use href="#i-direction"/></svg>调整方向</button></li>
        <li><button><svg class="icon"><use href="#i-copylayer"/></svg>复制到其它分层</button></li>
        <li class="sep"></li>
        <li><button><svg class="icon"><use href="#i-show"/></svg>显示选中图元</button></li>
        <li><button><svg class="icon"><use href="#i-hide"/></svg>隐藏选中图元</button></li>
        <li><button disabled><svg class="icon"><use href="#i-unhide"/></svg>恢复图元显示</button></li>
    </ul>

    <!-- 标注箭头 -->
    <svg class="callout" viewBox="0 0 140 262"><path d="M1 0L18 9l-4 3 126 249-2 1L5 17l-4 2z" fill="#ff1f14"/></svg>
</body>
</html>
```
FILE: styles.css
```css
/* 全局样式 */
* {
    box-sizing: border-box;
}

body {
    margin: 0;
    height: 100vh;
    display: flex;
    flex-direction: column;
    position: relative;
    overflow: hidden;
    background: #fff;
    color: #111;
    font: 12px/16px "Noto Sans", "Noto Sans CJK SC", sans-serif;
}

button {
    margin: 0;
    padding: 0;
    border: 0;
    background: none;
    color: inherit;
    font: inherit;
    white-space: nowrap;
    display: flex;
    align-items: center;
}

button:disabled {
    color: #aaa;
}

ul {
    margin: 0;
    padding: 0;
    list-style: none;
}

.sprite {
    display: none;
}

.icon {
    width: 16px;
    height: 16px;
    flex: none;
}

/* 下拉小三角 */
.arrow {
    flex: none;
    margin-left: 5px;
    border: 3px solid transparent;
    border-top-color: #444;
    border-bottom: 0;
}

.arrow.big {
    margin-left: 6px;
    border-width: 4px;
    border-bottom: 0;
}

button:disabled .arrow {
    border-top-color: #aaa;
}

/* 标题栏 */
.titlebar {
    flex: none;
    height: 13px;
    padding-bottom: 4px;
    display: flex;
    align-items: flex-end;
    overflow: hidden;
}

.quick {
    margin-left: -3px;
    display: flex;
    gap: 7px;
}

.app-title {
    margin-left: 513px;
    white-space: nowrap;
}

/* 功能页签 */
.tabs {
    flex: none;
    height: 19px;
    margin-left: -1px;
    display: flex;
    border-bottom: 1px solid #d0d0d0;
}

.tabs a {
    padding: 2px 13px 0;
    color: #444;
    text-decoration: none;
}

.tabs .active {
    background: #56a5f3;
    border-radius: 2px 2px 0 0;
    color: #fff;
}

.account {
    margin-left: auto;
    padding-right: 8px;
    display: flex;
    gap: 9px;
}

.bell {
    width: 12px;
}

/* 功能区 */
.ribbon {
    flex: none;
    height: 98px;
    display: flex;
    overflow: hidden;
    background: linear-gradient(#fff 40%, #e8ebee);
    border-bottom: 1px solid #9a9ea4;
}

.group {
    flex: none;
    margin-bottom: 4px;
    padding: 3px 10px 0 9px;
    border-right: 1px solid #c9ccd0;
}

.group-select {
    margin-left: -5px;
    padding: 3px 13px 0 0;
}

.group-cad {
    padding-right: 14px;
}

.group-common .cmds {
    column-gap: 10px;
}

.group-edit {
    padding-left: 6px;
}

.cmds {
    display: grid;
    grid-auto-flow: column;
    grid-template-rows: repeat(3, 23px);
    column-gap: 11px;
}

.cmds .icon {
    margin-right: 3px;
}

.icons-only .icon {
    margin-right: 0;
}

.tail {
    width: 80px;
}

.group h2 {
    margin: 0;
    padding-top: 5px;
    display: flex;
    align-items: center;
    justify-content: center;
    font-size: 12px;
    font-weight: 400;
}

.mixed {
    display: flex;
    gap: 6px;
}

.big-cmd {
    width: 36px;
    height: 69px;
    padding-top: 3px;
    flex-direction: column;
}

.big-cmd.wide {
    width: 48px;
}

.icon-big {
    width: 30px;
    height: 30px;
    margin-bottom: 6px;
}

.big-cmd .arrow {
    margin: 6px 0 0;
}

/* 构件选择栏 */
.combobar {
    flex: none;
    height: 29px;
    padding: 4px 7px 0;
    display: flex;
    gap: 6px;
    background: #c8cbd0;
    border-bottom: 1px solid #84888e;
}

.combo {
    position: relative;
    width: 99px;
    height: 22px;
}

.combo::after {
    content: "";
    position: absolute;
    right: 4px;
    top: 10px;
    border: 3px solid transparent;
    border-top-color: #444;
    border-bottom: 0;
}

.combo select {
    width: 100%;
    height: 100%;
    padding: 0 3px;
    appearance: none;
    border: 1px solid #a9adb3;
    border-radius: 0;
    background: #fff;
    color: #111;
    font: inherit;
}

/* 工作区 */
.workspace {
    flex: 1;
    min-height: 0;
    display: flex;
}

.navtree {
    flex: none;
    width: 69px;
    margin-bottom: 2px;
    border-right: 1px solid #b5b8bc;
    border-bottom: 1px solid #b5b8bc;
}

.view-switch {
    height: 28px;
    padding: 1px 4px 0;
    display: flex;
    justify-content: flex-end;
    gap: 5px;
    background: #ededef;
    border-bottom: 1px solid #c4c7cb;
}

.view-switch button {
    width: 24px;
    height: 24px;
    justify-content: center;
    border: 1px solid #5fa6ea;
    border-radius: 3px;
    background: #e4f3ff;
}

.navtree ul {
    margin-top: 316px;
    overflow: hidden;
}

.navtree li {
    height: 24px;
    line-height: 24px;
    text-indent: -1px;
}

.navtree .selected {
    height: 22px;
    margin: 1px 0;
    line-height: 22px;
    background: #c9d9ef;
}

/* 停靠面板 */
.docks {
    flex: none;
    width: 298px;
    margin-left: 4px;
    margin-bottom: 1px;
    display: flex;
    flex-direction: column;
    gap: 4px;
}

.panel {
    display: flex;
    flex-direction: column;
    border: 1px solid #b5b8bc;
    border-top: 0;
}

.panel-list {
    flex: none;
    height: 331px;
}

.panel-props {
    flex: 1;
    min-height: 0;
}

.panel-bar {
    height: 12px;
    padding: 1px 5px 0 0;
    display: flex;
    justify-content: flex-end;
    align-items: center;
    background: #d0d3d8;
    color: #555;
}

.panel-tabs {
    height: 22px;
    display: flex;
    background: #ededed;
    border-bottom: 1px solid #c0c3c7;
}

.panel-tabs button {
    padding: 0 8px;
    border-right: 1px solid #b9bcc0;
    background: #dedede;
    color: #888;
}

.panel-tabs .active {
    background: #f2f2f2;
    color: #222;
    font-weight: 700;
}

.panel-tools {
    height: 30px;
    padding: 0 0 0 3px;
    display: flex;
    gap: 15px;
    background: #f0f0f0;
    border-bottom: 1px solid #c0c3c7;
}

.panel-tools .icon {
    margin-right: 3px;
}

.panel-tools .more {
    margin-left: auto;
}

.more i {
    border: 3px solid transparent;
    border-left: 4px solid #444;
    border-right: 0;
}

.search {
    height: 19px;
    padding: 1px 6px 0 3px;
    display: flex;
    align-items: center;
    border-bottom: 1px solid #c0c3c7;
}

.search input {
    flex: 1;
    min-width: 0;
    padding: 0;
    border: 0;
    outline: 0;
    font: inherit;
}

.search input::placeholder {
    color: #777;
}

.icon-search {
    width: 11px;
    height: 11px;
}

.tree {
    flex: 1;
    line-height: 21px;
}

.tree-root {
    padding-left: 10px;
    display: flex;
    align-items: center;
    gap: 7px;
}

.twisty {
    width: 7px;
    height: 7px;
}

.tree ul {
    padding-left: 40px;
}

.tree li span {
    display: inline-block;
    padding: 0 5px;
}

.tree .selected {
    background: #c9d9ef;
}

/* 属性表 */
.props-body {
    flex: 1;
    background: linear-gradient(to right, #f0f0f0 22px, #fff 22px);
}

.props {
    width: 100%;
    table-layout: fixed;
    border-spacing: 0;
}

.props th,
.props td {
    height: 21px;
    padding: 0;
    border-right: 1px solid #b9c0c6;
    border-bottom: 1px solid #b9c0c6;
    font-weight: 400;
    white-space: nowrap;
}

.props td {
    padding-left: 3px;
    background: #fff;
}

.props tbody th {
    background: #f0f0f0;
    color: #444;
}

.props thead th {
    padding-top: 2px;
    border-color: #f0f0f0;
    background: #efefef;
    color: #333;
}

.props thead th:nth-child(1) {
    width: 22px;
}

.props thead th:nth-child(2) {
    width: 100px;
    border-bottom-color: #b9c0c6;
}

.props thead th:nth-child(3) {
    width: 140px;
}

.props thead .corner {
    background: #fff;
    border-color: #fff;
}

.props thead .current,
.props tbody .current {
    background: #7fb9f8;
    border-color: #7fb9f8;
    color: #fff;
    font-weight: 700;
}

.props .key {
    color: #2257d6;
}

.props .off {
    background: #e9e9e9;
}

.props .fold {
    padding-left: 21px;
    position: relative;
}

.expander {
    position: absolute;
    left: 1px;
    top: 3px;
    width: 14px;
    height: 14px;
    border: 1px solid #888;
    border-radius: 2px;
    background: linear-gradient(#111, #111) center / 8px 1px no-repeat,
                linear-gradient(#111, #111) center / 1px 8px no-repeat, #fff;
}

.expander.open {
    background: linear-gradient(#111, #111) center / 8px 1px no-repeat, #fff;
}

.props .child {
    padding-left: 31px;
    position: relative;
}

/* 树形连线 */
.child::before {
    content: "";
    position: absolute;
    left: 8px;
    top: -1px;
    width: 1px;
    height: 22px;
    background: #aaa;
}

.child.last::before {
    height: 11px;
}

.child::after {
    content: "";
    position: absolute;
    left: 8px;
    top: 10px;
    width: 18px;
    height: 1px;
    background: #aaa;
}

.props .editing {
    padding: 0 7px;
    border: 2px solid #777;
}

.swatch {
    width: 100%;
    height: 11px;
    border: 1px solid #d8c08a;
    background: #fbc93d;
}

/* 面板分隔条 */
.splitter {
    flex: none;
    width: 4px;
    padding-top: 372px;
}

.splitter button {
    width: 4px;
    height: 100px;
    background: #555b68;
}

.splitter button::before {
    content: "";
    border: 3px solid transparent;
    border-right-color: #dde;
    border-left: 0;
}

/* 绘图区 */
.canvas {
    flex: 1;
    min-width: 0;
    background: #000;
    overflow: hidden;
}

.drawing {
    display: block;
    width: 100%;
    height: 100%;
}

.axis-lines {
    fill: none;
    stroke: #0b7a1c;
}

.ticks {
    fill: none;
    stroke: #1d6a24;
}

.slab {
    fill: #1e6fff;
    stroke: #8fb4f8;
    stroke-width: 2;
}

.grid-lines {
    fill: none;
    stroke: #a01c50;
}

.handles {
    fill: #00ff00;
}

.bubbles {
    fill: none;
    stroke: #157a20;
    stroke-dasharray: 5 1;
}

.labels {
    fill: #fff;
    font: 18px "Noto Sans CJK SC", sans-serif;
    text-anchor: middle;
}

.ucs {
    font: 14px "Noto Sans CJK SC", sans-serif;
    text-anchor: middle;
}

/* 状态栏 */
.statusbar {
    flex: none;
    height: 16px;
    padding-top: 3px;
    display: flex;
    overflow: hidden;
    background: #dcdcde;
    color: #333;
    line-height: 26px;
    white-space: nowrap;
}

.st-a {
    width: 104px;
    text-indent: -3px;
}

.st-b {
    width: 83px;
}

.st-c {
    width: 133px;
}

.st-d {
    width: 103px;
}

.st-e {
    width: 80px;
}

.snap {
    margin-right: 4px;
    display: flex;
    gap: 4px;
}

.snap button {
    height: 26px;
    padding: 0 4px;
    border: 1px solid #a5a5a7;
    background: #cdcdcf;
}

.snap .text {
    padding: 0 5px;
}

.snap .icon {
    margin: 0 -1px;
}

.snap .on {
    border-color: #3d86d8;
    background: #fff;
}

.snap .flat {
    border-color: #c4c4c6;
}

/* 右键菜单 */
.context-menu {
    position: absolute;
    top: -8px;
    left: 1034px;
    width: 194px;
    padding: 2px;
    border: 1px solid #c8c8c8;
    border-top: 0;
    background: #fff;
}

.context-menu li {
    padding: 1px 0;
}

.context-menu button {
    width: 100%;
    height: 21px;
    padding-left: 3px;
}

.context-menu .icon {
    margin-right: 9px;
}

.context-menu kbd {
    margin-left: 12px;
    font: inherit;
}

.context-menu .selected {
    background: #c9d9ef;
}

.context-menu .hover {
    background: #dde8f7;
}

.context-menu .sep {
    height: 1px;
    margin: 3px 3px 5px 1px;
    padding: 0;
    background: #cfcfcf;
}

.callout {
    position: absolute;
    top: 310px;
    left: 1151px;
    width: 140px;
    height: 262px;
    pointer-events: none;
}
```
